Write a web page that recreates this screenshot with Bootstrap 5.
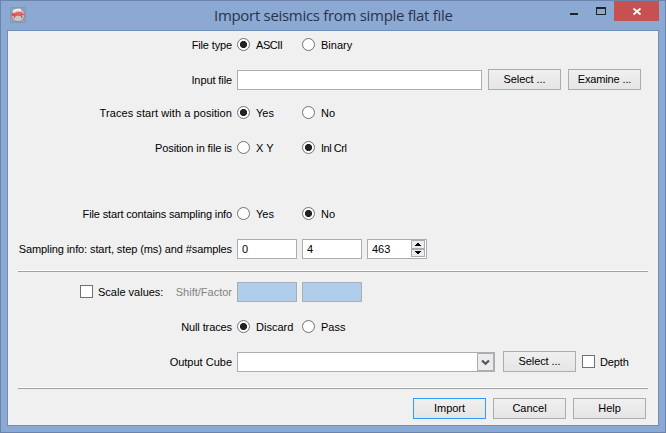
<!DOCTYPE html>
<html lang="en">
<head>
<meta charset="utf-8">
<meta name="viewport" content="width=device-width, initial-scale=1">
<title>Import seismics from simple flat file</title>
<link href="https://cdn.jsdelivr.net/npm/bootstrap@5.3.0/dist/css/bootstrap.min.css" rel="stylesheet">
<style>
html,body{height:100%}
body{font:11px/21px "Liberation Sans",Arial,sans-serif;color:#000;overflow:hidden}
.win{width:666px;height:433px;background:#8ca9d4;border:1px solid #6c83ab;padding:0 6px 6px}
.titlebar{height:29px}
.app-icon{margin:6px 0 0 3px;width:16px;height:16px}
.app-title{font:15px/29px "Open Sans","Noto Sans",sans-serif;color:#27344b;white-space:nowrap;letter-spacing:-.3px;margin-left:188px;width:240px}
.win-btns{height:20px}
.win-close{width:45px;height:20px;background:#c75050}
.pane{width:652px;height:396px;background:#f0f0f0;border:1px solid #6f8fb9;padding:3px 10px 0}
.line{height:21px;white-space:nowrap}
.lbl{width:214px;margin-right:5px;text-align:right;line-height:22px}
.opt{width:65px;line-height:22px}
.t-wide{letter-spacing:.07px}
.t-narrow{letter-spacing:-.1px}
.t-tight{letter-spacing:-.14px}
.t-tighter{letter-spacing:-.45px}
.form-check-input.rb,.form-check-input.cb{width:13px;height:13px;margin:4px 6px 0 0;float:none;flex:none;border:1px solid #707070;background-color:#fff}
.form-check-input.rb:checked{background-color:#fff;background-image:radial-gradient(circle at 50% 50%,#222 0 3.2px,transparent 3.9px)}
.form-check-input.cb{border-radius:0;margin-right:5px}
.form-control.fld{height:20px;margin-top:1px;border:1px solid #abadb3;border-radius:0;padding:0 4px;font-size:11px;line-height:19px;color:#000;background:#fff;flex:none}
.form-control.fld:disabled{background:#b1cdec}
.w60{width:60px}
.btn.pb{width:73px;height:21px;padding:0;border:1px solid #acacac;border-radius:0;background:linear-gradient(#f0f0f0,#e5e5e5);font-size:11px;line-height:19px;color:#000;flex:none}
.btn.pb.dflt{border-color:#3399ff}
.rule{width:630px;height:2px;background:#a0a0a0;border-top:1px solid #fff}
.spin{width:60px;height:20px;margin-top:1px;border:1px solid #abadb3;background:#fff}
.spin input{width:42px;border:0;padding:0 0 0 4px;height:18px;font-size:11px;outline:0;color:#000}
.combo{width:258px;height:20px;margin-top:1px;border:1px solid #abadb3;background:#fff}
svg{display:block;flex:none}
</style>
</head>
<body>
<div class="win d-flex flex-column">
  <div class="titlebar d-flex align-items-start">
    <svg class="app-icon" viewBox="0 0 16 16"><path d="M.5.5h15v15H.5z" fill="#91a2bf" stroke="#8397b8"/><circle cx="8" cy="8" r="6.7" fill="#c9c6c4" stroke="#8c8f96"/><path d="M3 4.500Q7 1.500 11 3" stroke="#f1f1ef" stroke-width="2" fill="none"/><path d="M2 7h3l2-1h4l3 2M2 8.500l4-.5 5-.2M6 7l-2 4M11 7l1 4" fill="none" stroke="#e5484a" stroke-width="1.300"/></svg>
    <div class="app-title">Import seismics from simple flat file</div>
    <div class="win-btns d-flex ms-auto">
      <svg width="94" height="20" viewBox="0 0 94 20" shape-rendering="crispEdges"><path d="M50 12h8v2h-8z" fill="#222"/><path d="M76 6h10v8H76zm1 2v5h8V8z" fill="#222" fill-rule="evenodd"/></svg>
      <div class="win-close"><svg width="45" height="20" viewBox="0 0 45 20"><path d="M19.500 7.500l7 6m0-6l-7 6" stroke="#fff" stroke-width="1.700"/></svg></div>
    </div>
  </div>
  <div class="pane">
    <div class="line d-flex"><div class="lbl t-tight">File type</div>
      <label class="opt d-flex"><input class="form-check-input rb" type="radio" name="ft" checked><span class="t-tighter">ASCII</span></label>
      <label class="opt d-flex"><input class="form-check-input rb" type="radio" name="ft"><span>Binary</span></label></div>
    <div class="line d-flex" style="margin-top:14px"><div class="lbl t-narrow">Input file</div>
      <input class="form-control fld" style="width:245px" type="text">
      <button class="btn pb t-narrow" style="margin:0 7px 0 6px">Select ...</button><button class="btn pb t-tight">Examine ...</button></div>
    <div class="line d-flex" style="margin-top:12px"><div class="lbl t-wide">Traces start with a position</div>
      <label class="opt d-flex"><input class="form-check-input rb" type="radio" name="tp" checked><span>Yes</span></label>
      <label class="opt d-flex"><input class="form-check-input rb" type="radio" name="tp"><span>No</span></label></div>
    <div class="line d-flex" style="margin-top:14px"><div class="lbl t-narrow">Position in file is</div>
      <label class="opt d-flex"><input class="form-check-input rb" type="radio" name="pf"><span>X Y</span></label>
      <label class="opt d-flex"><input class="form-check-input rb" type="radio" name="pf" checked><span class="t-tighter">Inl Crl</span></label></div>
    <div class="line d-flex" style="margin-top:45px"><div class="lbl t-tight">File start contains sampling info</div>
      <label class="opt d-flex"><input class="form-check-input rb" type="radio" name="si"><span>Yes</span></label>
      <label class="opt d-flex"><input class="form-check-input rb" type="radio" name="si" checked><span>No</span></label></div>
    <div class="line d-flex" style="margin-top:14px"><div class="lbl t-narrow">Sampling info: start, step (ms) and #samples</div>
      <input class="form-control fld w60 me-0" type="text" value="0">
      <input class="form-control fld w60" style="margin-left:5px;margin-right:5px" type="text" value="4">
      <div class="spin d-flex"><input type="text" value="463">
        <svg width="16" height="18" viewBox="0 0 16 18" shape-rendering="crispEdges"><path d="M1.500.5h13v8h-13zM1.500 9.500h13v7h-13z" fill="#ececec" stroke="#acacac"/><path d="M7 3h2v1h1v1h1v1H5V5h1V4h1zM5 11h6v1h-1v1H9v1H7v-1H6v-1H5z" fill="#000"/></svg></div></div>
    <div class="rule" style="margin-top:11px"></div>
    <div class="line d-flex" style="margin-top:9px">
      <div class="d-flex lbl"><input class="form-check-input cb" style="margin-left:62px" type="checkbox"><span>Scale values:</span><span class="ms-auto" style="color:#838383">Shift/Factor</span></div>
      <input class="form-control fld w60" disabled><input class="form-control fld w60" style="margin-left:5px" disabled></div>
    <div class="line d-flex" style="margin-top:14px"><div class="lbl t-narrow">Null traces</div>
      <label class="opt d-flex"><input class="form-check-input rb" type="radio" name="nt" checked><span>Discard</span></label>
      <label class="opt d-flex"><input class="form-check-input rb" type="radio" name="nt"><span>Pass</span></label></div>
    <div class="line d-flex" style="margin-top:14px"><div class="lbl">Output Cube</div>
      <div class="combo d-flex justify-content-end"><svg width="17" height="18" viewBox="0 0 17 18"><path d="M.5.5h16v17H.5z" fill="#ececec" stroke="#abadb3"/><path d="M5 7.500l3.500 3.300L12 7.500" fill="none" stroke="#555" stroke-width="2.200"/></svg></div>
      <button class="btn pb t-narrow" style="margin:0 6px 0 8px">Select ...</button>
      <label class="d-flex" style="line-height:22px"><input class="form-check-input cb" type="checkbox"><span class="t-tight">Depth</span></label></div>
    <div class="rule" style="margin-top:15px"></div>
    <div class="d-flex" style="margin:9px 0 0 395px;gap:7px"><button class="btn pb dflt">Import</button><button class="btn pb">Cancel</button><button class="btn pb">Help</button></div>
  </div>
</div>
<script src="https://cdn.jsdelivr.net/npm/bootstrap@5.3.0/dist/js/bootstrap.bundle.min.js"></script>
</body>
</html>
